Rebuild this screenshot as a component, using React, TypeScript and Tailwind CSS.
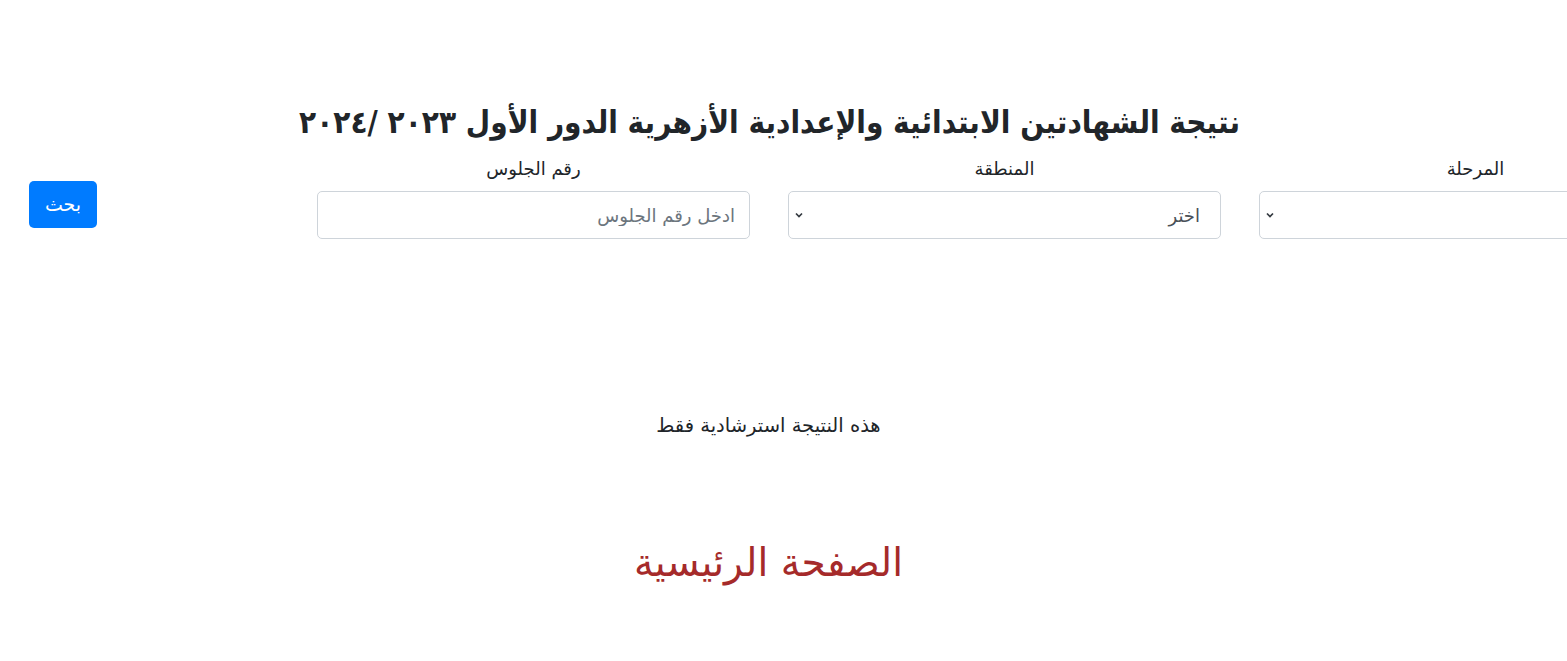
import React from 'react'

function Chevron() {
  return (
    <svg width="10" height="8" viewBox="0 0 10 8" className="pointer-events-none absolute left-[6px] top-1/2 -translate-y-1/2">
      <path d="M2 2.5 L5 5.5 L8 2.5" fill="none" stroke="#343a40" strokeWidth="1.7" />
    </svg>
  )
}

function Field({ label, children }: { label: string; children: React.ReactNode }) {
  return (
    <div className="w-[471px] shrink-0 px-[19px]">
      <div className="mb-[10px] h-[25px] text-center text-[18px] leading-[25px] text-[#212529]">{label}</div>
      {children}
    </div>
  )
}

export default function App() {
  return (
    <div
      dir="rtl"
      className="w-[1567px] h-[661px] overflow-hidden bg-white text-[#212529]"
      style={{ fontFamily: '"DejaVu Sans", "Noto Sans", sans-serif' }}
    >
      <h2 className="pt-[103px] pr-[28px] text-center text-[31.2px] font-bold leading-[38px] [font-stretch:condensed]">
        نتيجة الشهادتين الابتدائية والإعدادية الأزهرية الدور الأول ٢٠٢٣ /٢٠٢٤
      </h2>

      <div className="mt-[15px] mr-[-144px] flex items-start">
        <Field label="المرحلة">
          <div className="relative">
            <select className="h-12 w-full appearance-none rounded-[5px] border border-[#ced4da] bg-white pr-5 pl-8 text-[18px] text-[#495057] outline-none">
              <option></option>
            </select>
            <Chevron />
          </div>
        </Field>
        <Field label="المنطقة">
          <div className="relative">
            <select className="h-12 w-full appearance-none rounded-[5px] border border-[#ced4da] bg-white pr-5 pl-8 text-[18px] text-[#495057] outline-none">
              <option>اختر</option>
            </select>
            <Chevron />
          </div>
        </Field>
        <Field label="رقم الجلوس">
          <input
            placeholder="ادخل رقم الجلوس"
            className="h-12 w-full rounded-[5px] border border-[#ced4da] bg-white px-[14px] text-[18px] text-[#495057] outline-none placeholder:text-[#6c757d]"
          />
        </Field>
        <div className="flex flex-1 justify-end pl-[29px] pt-[25px]">
          <button className="h-[47px] w-[68px] rounded-[5px] bg-[#007bff] text-[19px] text-white">بحث</button>
        </div>
      </div>

      <div className="pr-[30px]">
        <p className="mt-[173px] text-center text-[19.5px] leading-[28px]">هذه النتيجة استرشادية فقط</p>

        <div className="mt-[95px] text-center text-[39px] leading-[56px] text-[#a52a2a]">الصفحة الرئيسية</div>
      </div>
    </div>
  )
}
